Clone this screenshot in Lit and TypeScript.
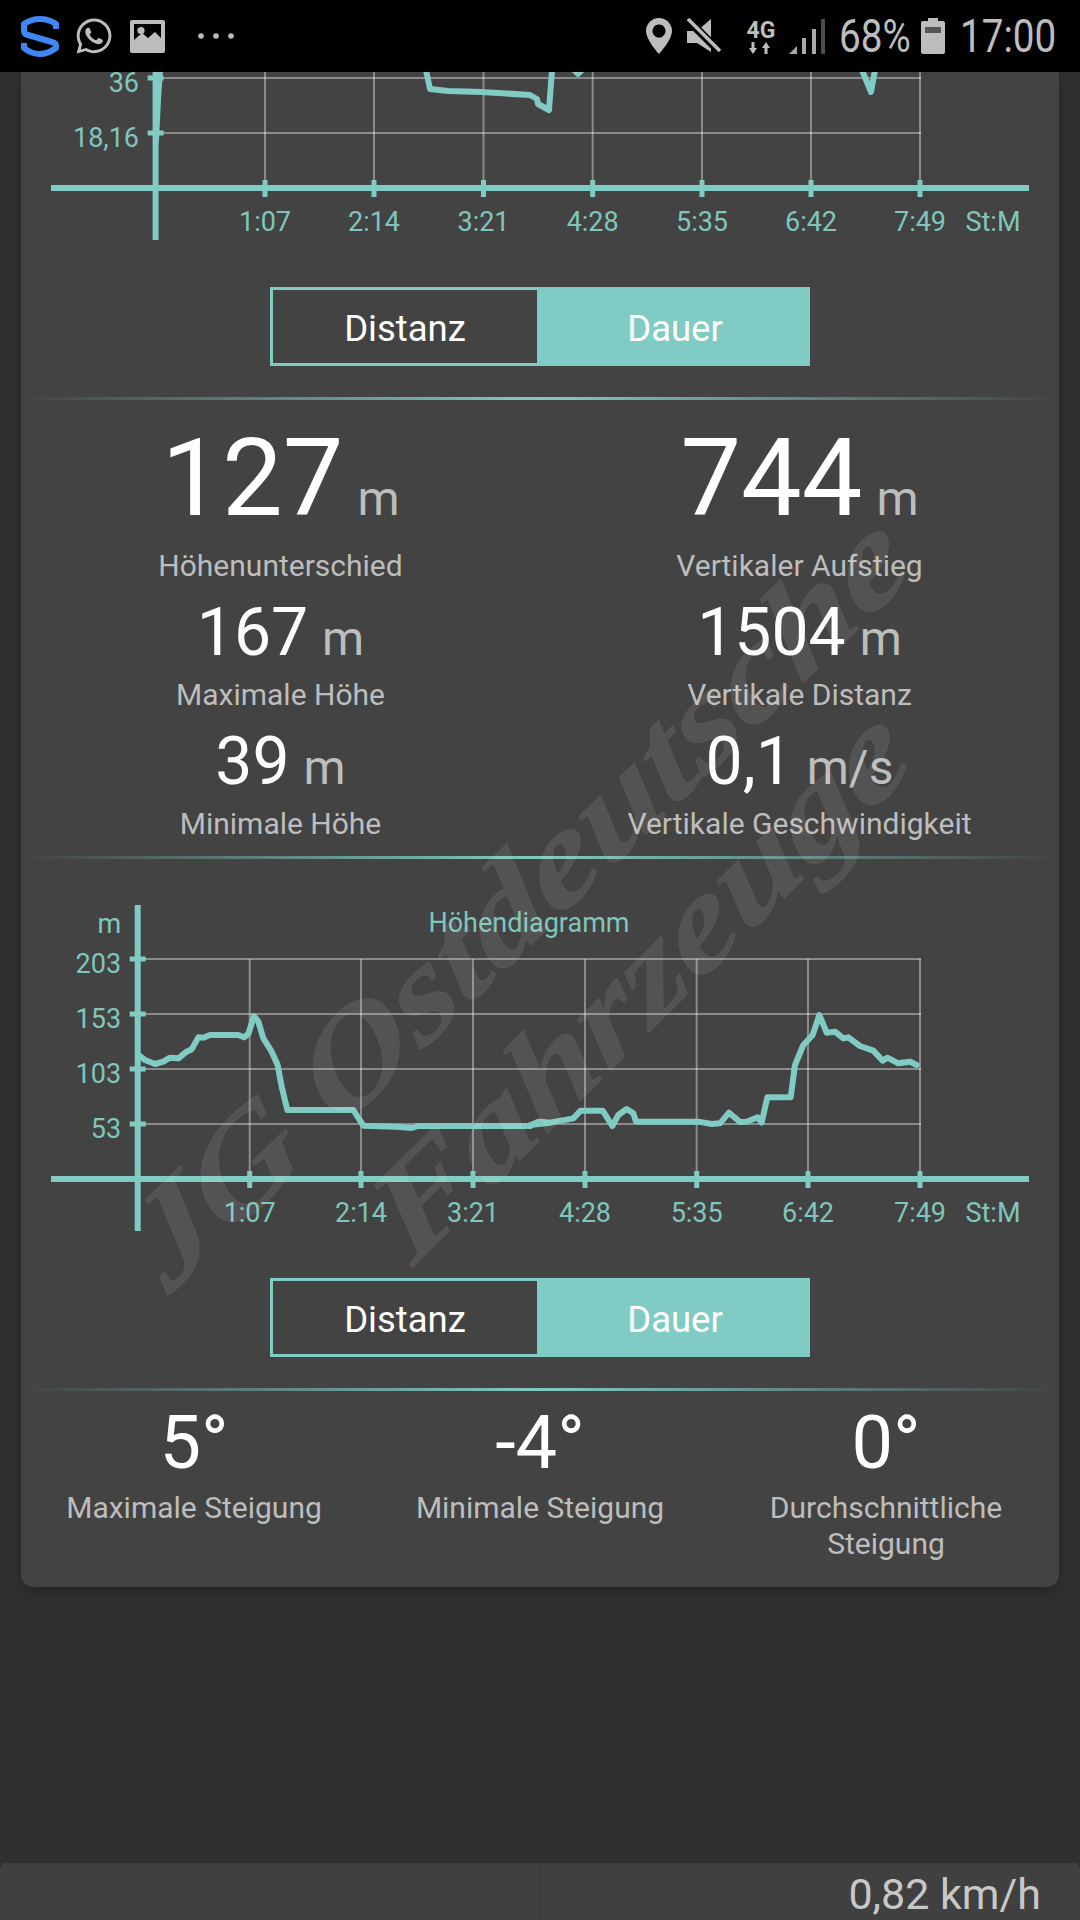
import { LitElement, css, html, svg } from 'lit'
import { customElement } from 'lit/decorators.js'

type Point = [number, number]

interface ChartConfig {
  top: number
  height: number
  axisX: number
  axisWidth: number
  axisTop: number
  axisBottom: number
  axisY: number
  gridTop: number
  rows: { y: number; label: string }[]
  unit?: { y: number; label: string }
  title?: { x: number; y: number; label: string }
  lines: Point[][]
  lineWidth: number
}

const columns: { x: number; label: string }[] = [
  { x: 265, label: '1:07' },
  { x: 374, label: '2:14' },
  { x: 483.5, label: '3:21' },
  { x: 592.7, label: '4:28' },
  { x: 702, label: '5:35' },
  { x: 811, label: '6:42' },
  { x: 920, label: '7:49' },
]

const columns2 = [249.7, 361, 473, 585, 696.7, 808, 920].map((x, i) => ({ x, label: columns[i].label }))

// traced from the screenshot crops: first block is 3x from (30,890), second 3x from (530,890)
const heightLeft: Point[] = [[325, 495], [345, 510], [375, 522], [400, 515], [420, 503], [445, 505], [470, 485], [485, 478], [505, 442], [520, 443], [540, 435], [625, 435], [642, 442], [655, 432], [672, 378], [685, 395], [700, 445], [725, 485], [743, 525], [755, 590], [772, 660], [970, 660], [1000, 707], [1100, 710], [1145, 714], [1165, 708], [1500, 708], [1520, 697], [1560, 698]]
const heightRight: Point[] = [[0, 705], [30, 695], [60, 698], [130, 685], [152, 662], [218, 662], [247, 708], [265, 675], [290, 657], [310, 670], [318, 695], [505, 695], [545, 702], [570, 700], [597, 668], [630, 696], [650, 695], [683, 682], [695, 698], [712, 622], [782, 622], [795, 525], [820, 465], [848, 435], [868, 375], [890, 428], [915, 425], [940, 445], [955, 442], [990, 468], [1030, 482], [1058, 512], [1072, 503], [1105, 520], [1140, 515], [1160, 525]]

const heightLine: Point[] = [
  ...heightLeft.map(([x, y]): Point => [30 + x / 3, 890 + y / 3]),
  ...heightRight.map(([x, y]): Point => [530 + x / 3, 890 + y / 3]),
]

const speedChart: ChartConfig = {
  top: 72,
  height: 198,
  axisX: 155.6,
  axisWidth: 6,
  axisTop: 72,
  axisBottom: 240,
  axisY: 188,
  gridTop: 72,
  rows: [
    { y: 78, label: '36' },
    { y: 133, label: '18,16' },
  ],
  lines: [
    [[156, 140], [158, 100], [160, 70]],
    [[426, 70], [430, 89], [448, 91], [482, 92], [530, 95], [537, 99], [538, 104], [549, 110], [552, 70]],
    [[574, 70], [578, 74], [582, 70]],
    [[862, 70], [871, 92], [875, 70]],
  ],
  lineWidth: 6,
}

const heightChart: ChartConfig = {
  top: 859,
  height: 411,
  axisX: 137.7,
  axisWidth: 6,
  axisTop: 905,
  axisBottom: 1231,
  axisY: 1179,
  gridTop: 959,
  rows: [
    { y: 959, label: '203' },
    { y: 1014, label: '153' },
    { y: 1069, label: '103' },
    { y: 1124, label: '53' },
  ],
  unit: { y: 933, label: 'm' },
  title: { x: 529, y: 932, label: 'Höhendiagramm' },
  lines: [heightLine],
  lineWidth: 6,
}

const pts = (line: Point[]) => line.map((p) => p.join(',')).join(' ')

const stats = [
  { value: '127', unit: 'm', label: 'Höhenunterschied', big: true },
  { value: '744', unit: 'm', label: 'Vertikaler Aufstieg', big: true },
  { value: '167', unit: 'm', label: 'Maximale Höhe' },
  { value: '1504', unit: 'm', label: 'Vertikale Distanz' },
  { value: '39', unit: 'm', label: 'Minimale Höhe' },
  { value: '0,1', unit: 'm/s', label: 'Vertikale Geschwindigkeit' },
]

const slopes = [
  { value: '5°', label: 'Maximale Steigung' },
  { value: '-4°', label: 'Minimale Steigung' },
  { value: '0°', label: 'Durchschnittliche Steigung' },
]

@customElement('app-root')
export class AppRoot extends LitElement {
  private renderChart(c: ChartConfig, cols: { x: number; label: string }[]) {
    const right = cols[cols.length - 1].x
    return html`
      <svg class="chart" width="1038" height=${c.height} viewBox="21 ${c.top} 1038 ${c.height}">
        ${cols.map((col) => svg`<line class="grid" x1=${col.x} x2=${col.x} y1=${c.gridTop} y2=${c.axisY}></line>`)}
        ${c.rows.map((r) => svg`<line class="grid" x1=${c.axisX} x2=${right + 1} y1=${r.y} y2=${r.y}></line>`)}
        ${c.lines.map(
          (l) => svg`<polyline class="curve" style="stroke-width:${c.lineWidth}" points=${pts(l)}></polyline>`,
        )}
        <rect class="axis" x="51" y=${c.axisY - 3} width="978" height="6"></rect>
        <rect class="axis" x=${c.axisX - c.axisWidth / 2} y=${c.axisTop} width=${c.axisWidth} height=${c.axisBottom - c.axisTop}></rect>
        ${cols.map(
          (col) => svg`
            <rect class="axis" x=${col.x - 2.5} y=${c.axisY - 8} width="5" height="17"></rect>
            <text class="tick" x=${col.x} y=${c.axisY + 43} text-anchor="middle">${col.label}</text>
          `,
        )}
        ${c.rows.map(
          (r) => svg`
            <rect class="axis" x=${c.axisX - 8} y=${r.y - 2.5} width="16" height="5"></rect>
            <text class="tick" x=${c.axisX - 16.6} y=${r.y + 14} text-anchor="end">${r.label}</text>
          `,
        )}
        ${c.unit
          ? svg`<text class="tick" x=${c.axisX - 16.6} y=${c.unit.y} text-anchor="end">${c.unit.label}</text>`
          : ''}
        ${c.title
          ? svg`<text class="tick" x=${c.title.x} y=${c.title.y} text-anchor="middle">${c.title.label}</text>`
          : ''}
        <text class="tick" x="993" y=${c.axisY + 43} text-anchor="middle">St:M</text>
      </svg>
    `
  }

  private renderToggle() {
    return html`
      <div class="toggle">
        <div class="option">Distanz</div>
        <div class="option active">Dauer</div>
      </div>
    `
  }

  private renderStatusBar() {
    return html`
      <header class="status">
        <svg class="shield" width="40" height="44" viewBox="0 0 40 44">
          <path d="M36 15 V10 Q29 5 20 5 Q11 5 4 10 V17 Q4 20 8 21 L32 28 Q36 29 36 32 V34 Q28 40 20 40 Q11 40 4 34 V29"></path>
        </svg>
        <svg class="icon whatsapp" width="42" height="42" viewBox="0 0 24 24">
          <path d="M12.04 2C6.58 2 2.13 6.45 2.13 11.91C2.13 13.66 2.59 15.36 3.45 16.86L2.05 22L7.3 20.62C8.75 21.41 10.38 21.83 12.04 21.83C17.5 21.83 21.95 17.38 21.95 11.92C21.95 9.27 20.92 6.78 19.05 4.91C17.18 3.03 14.69 2 12.04 2M12.05 3.67C14.25 3.67 16.31 4.53 17.87 6.09C19.42 7.65 20.28 9.72 20.28 11.92C20.28 16.46 16.58 20.15 12.04 20.15C10.56 20.15 9.11 19.76 7.85 19L7.55 18.83L4.43 19.65L5.26 16.61L5.06 16.29C4.24 15 3.8 13.47 3.8 11.91C3.81 7.37 7.5 3.67 12.05 3.67M8.53 7.33C8.37 7.33 8.1 7.39 7.87 7.64C7.65 7.89 7 8.5 7 9.71C7 10.93 7.89 12.1 8 12.27C8.14 12.44 9.76 14.94 12.25 16C12.84 16.27 13.3 16.42 13.66 16.53C14.25 16.72 14.79 16.69 15.22 16.63C15.7 16.56 16.68 16.03 16.89 15.45C17.1 14.87 17.1 14.38 17.04 14.27C16.97 14.17 16.81 14.11 16.56 14C16.31 13.86 15.09 13.26 14.87 13.18C14.64 13.1 14.5 13.06 14.31 13.3C14.15 13.55 13.67 14.11 13.53 14.27C13.38 14.44 13.24 14.46 13 14.34C12.74 14.21 11.94 13.95 11 13.11C10.26 12.45 9.77 11.64 9.62 11.39C9.5 11.15 9.61 11 9.73 10.89C9.84 10.78 10 10.6 10.1 10.45C10.23 10.31 10.27 10.2 10.35 10.04C10.43 9.87 10.39 9.73 10.33 9.61C10.27 9.5 9.77 8.26 9.56 7.77C9.36 7.29 9.16 7.35 9 7.34C8.86 7.34 8.7 7.33 8.53 7.33Z"></path>
        </svg>
        <svg class="icon picture" width="35" height="33" viewBox="0 0 35 33">
          <path fill-rule="evenodd" d="M2 0H33a2 2 0 0 1 2 2V31a2 2 0 0 1-2 2H2a2 2 0 0 1-2-2V2a2 2 0 0 1 2-2ZM4 4V20L12 13L18 18L25 12L31 18V4Z"></path>
          <circle cx="11" cy="10.5" r="3.6"></circle>
        </svg>
        <svg class="icon dots" width="36" height="6" viewBox="0 0 36 6">
          <circle cx="3" cy="3" r="2.8"></circle>
          <circle cx="18" cy="3" r="2.8"></circle>
          <circle cx="33" cy="3" r="2.8"></circle>
        </svg>
        <span class="spacer"></span>
        <svg class="icon pin" width="26" height="36" viewBox="0 0 26 36">
          <path fill-rule="evenodd" d="M13 0C5.8 0 0 5.8 0 13C0 22 13 36 13 36S26 22 26 13C26 5.8 20.2 0 13 0ZM13 6.5a6.5 6.5 0 1 0 .01 0Z"></path>
        </svg>
        <svg class="icon mute" width="34" height="36" viewBox="0 0 34 36">
          <path d="M0 13H10L24 1V34L10 25H0Z"></path>
          <line class="cut" x1="0" y1="1" x2="33" y2="34"></line>
          <line class="slash" x1="1" y1="1" x2="33" y2="33"></line>
        </svg>
        <div class="net">
          <span>4G</span>
          <svg class="icon" width="24" height="12" viewBox="0 0 24 12">
            <path d="M2.5 0H5.5V6H8L4 12L0 6H2.5ZM18.5 12H15.5V6H13L17 0L21 6H18.5Z"></path>
          </svg>
        </div>
        <svg class="icon signal" width="36" height="35" viewBox="0 0 36 35">
          <path d="M0 35L8 27V35Z"></path>
          <rect x="13" y="19" width="4" height="16"></rect>
          <rect x="23" y="10" width="4" height="25"></rect>
          <rect class="off" x="32" y="0" width="4" height="35"></rect>
        </svg>
        <span class="clock percent">68%</span>
        <svg class="icon battery" width="24" height="36" viewBox="0 0 24 36">
          <path d="M7 0H17V3H22a2 2 0 0 1 2 2V34a2 2 0 0 1-2 2H2a2 2 0 0 1-2-2V5a2 2 0 0 1 2-2H7Z"></path>
          <rect class="level" x="4" y="9" width="16" height="6"></rect>
        </svg>
        <span class="clock time">17:00</span>
      </header>
    `
  }

  protected render() {
    return html`
      ${this.renderStatusBar()}
      <main class="content">
        <section class="card">
          ${this.renderChart(speedChart, columns)} ${this.renderToggle()}
          <div class="divider first"></div>
          <div class="stats">
            ${stats.map(
              (s) => html`
                <div class="stat ${s.big ? 'big' : ''}">
                  <div class="value">${s.value}<span class="unit">${s.unit}</span></div>
                  <div class="label">${s.label}</div>
                </div>
              `,
            )}
          </div>
          <div class="divider"></div>
          ${this.renderChart(heightChart, columns2)} ${this.renderToggle()}
          <div class="divider first"></div>
          <div class="slopes">
            ${slopes.map(
              (s) => html`
                <div class="slope">
                  <div class="value">${s.value}</div>
                  <div class="label">${s.label}</div>
                </div>
              `,
            )}
          </div>
        </section>
      </main>
      <footer class="bottom">
        <div class="cell"></div>
        <div class="cell"></div>
        <div class="cell"></div>
        <div class="cell speed">0,82 km/h</div>
      </footer>
      <svg class="watermark" width="1080" height="1848" viewBox="0 72 1080 1848">
        <text transform="translate(168 1296) rotate(-44) skewX(-10)" textLength="1040" lengthAdjust="spacingAndGlyphs">JG Ostdeutsche</text>
        <text transform="translate(412 1268) rotate(-44.8) skewX(-10)" textLength="712" lengthAdjust="spacingAndGlyphs">Fahrzeuge</text>
      </svg>
    `
  }

  static styles = css`
    :host {
      display: flex;
      flex-direction: column;
      position: relative;
      width: 1080px;
      height: 1920px;
      overflow: hidden;
      background: #303030;
      font-family: Roboto, 'Liberation Sans', sans-serif;
      --teal: #80cbc4;
    }

    .status {
      display: flex;
      align-items: center;
      flex: none;
      height: 72px;
      padding: 0 24px 0 20px;
      box-sizing: border-box;
      background: #000;
    }

    .status svg {
      flex: none;
      display: block;
    }

    .icon {
      fill: #bdbdbd;
    }

    .shield path {
      fill: none;
      stroke: #3f86f7;
      stroke-width: 6;
      stroke-linejoin: round;
    }

    .whatsapp {
      margin-left: 13px;
    }

    .picture {
      margin-left: 15px;
    }

    .dots {
      margin-left: 33px;
    }

    .spacer {
      flex: 1;
    }

    .mute {
      margin-left: 15px;
    }

    .cut {
      stroke: #000;
      stroke-width: 8;
    }

    .slash {
      stroke: #bdbdbd;
      stroke-width: 3.5;
    }

    .net {
      display: flex;
      flex-direction: column;
      align-items: center;
      width: 30px;
      margin-left: 25px;
      color: #bdbdbd;
      font-size: 23px;
      font-weight: 700;
      line-height: 23px;
    }

    .signal {
      margin-left: 13px;
    }

    .signal rect,
    .signal path {
      fill: #a8a8a8;
    }

    .signal .off {
      fill: #4c4c4c;
    }

    .clock {
      flex: none;
      color: #bdbdbd;
      font-size: 46px;
      line-height: 72px;
      white-space: nowrap;
      transform: scaleX(0.84);
      transform-origin: 0 50%;
    }

    .percent {
      width: 70px;
      margin-left: 14px;
    }

    .battery {
      margin-left: 12px;
    }

    .level {
      fill: #555;
    }

    .time {
      width: 96px;
      margin-left: 15px;
    }

    .content {
      flex: 1;
      min-height: 0;
      padding: 0 21px;
    }

    .card {
      display: flex;
      flex-direction: column;
      height: 1515px;
      background: #434343;
      border-radius: 0 0 12px 12px;
      box-shadow: 0 6px 14px rgba(0, 0, 0, 0.22);
    }

    .chart {
      display: block;
      flex: none;
    }

    .grid {
      stroke: rgba(255, 255, 255, 0.38);
      stroke-width: 2;
    }

    .curve {
      fill: none;
      stroke: var(--teal);
      stroke-linejoin: round;
      stroke-linecap: round;
    }

    .axis {
      fill: var(--teal);
    }

    .tick {
      fill: #7fc6bd;
      font-size: 27px;
    }

    .toggle {
      display: flex;
      flex: none;
      align-self: center;
      width: 540px;
      height: 79px;
      margin-top: 17px;
      font-size: 36.5px;
      color: #fff;
    }

    .chart:nth-of-type(2) + .toggle {
      margin-top: 8px;
    }

    .option {
      flex: 1;
      display: flex;
      align-items: center;
      justify-content: center;
      box-sizing: border-box;
      padding-top: 4px;
      border: 3px solid var(--teal);
    }

    .option.active {
      background: var(--teal);
    }

    .divider {
      flex: none;
      height: 3px;
      background: linear-gradient(90deg, transparent, var(--teal) 50%, transparent);
    }

    .divider.first {
      margin-top: 31px;
    }

    .stats {
      display: grid;
      grid-template-columns: 1fr 1fr;
      row-gap: 13.5px;
      padding: 23px 0 14px;
    }

    .stat,
    .slope {
      display: flex;
      flex-direction: column;
      align-items: center;
      text-align: center;
    }

    .value {
      color: #fff;
      font-size: 66px;
      line-height: 70px;
      white-space: nowrap;
    }

    .stat.big .value {
      font-size: 108px;
      line-height: 110px;
    }

    .unit {
      margin-left: 14px;
      color: #bdbdbd;
      font-size: 48px;
      line-height: 0;
    }

    .label {
      margin-top: 9.5px;
      color: #bdbdbd;
      font-size: 30px;
      line-height: 36px;
    }

    .stat.big .label {
      margin-top: 15px;
    }

    .slopes {
      display: grid;
      grid-template-columns: repeat(3, 1fr);
      padding: 12px 0 0;
    }

    .slope {
      padding: 0 30px;
    }

    .slope .value {
      font-size: 74px;
      line-height: 80px;
    }

    .slope .label {
      margin-top: 7px;
    }

    .bottom {
      display: grid;
      grid-template-columns: repeat(4, 1fr);
      flex: none;
      height: 57px;
      background: #404040;
      border-radius: 6px 6px 0 0;
    }

    .cell {
      border-left: 1px solid #3a3a3a;
    }

    .cell:first-child {
      border-left: 0;
    }

    .speed {
      padding-right: 39px;
      color: #c8c8c8;
      font-size: 43px;
      line-height: 62px;
      text-align: right;
      white-space: nowrap;
    }

    .watermark {
      position: absolute;
      left: 0;
      top: 72px;
      pointer-events: none;
    }

    .watermark text {
      fill: rgba(255, 255, 255, 0.09);
      stroke: rgba(170, 130, 110, 0.12);
      stroke-width: 1;
      font-family: 'Liberation Serif', serif;
      font-size: 130px;
      font-style: italic;
      font-weight: 700;
    }
  `
}

declare global {
  interface HTMLElementTagNameMap {
    'app-root': AppRoot
  }
}
